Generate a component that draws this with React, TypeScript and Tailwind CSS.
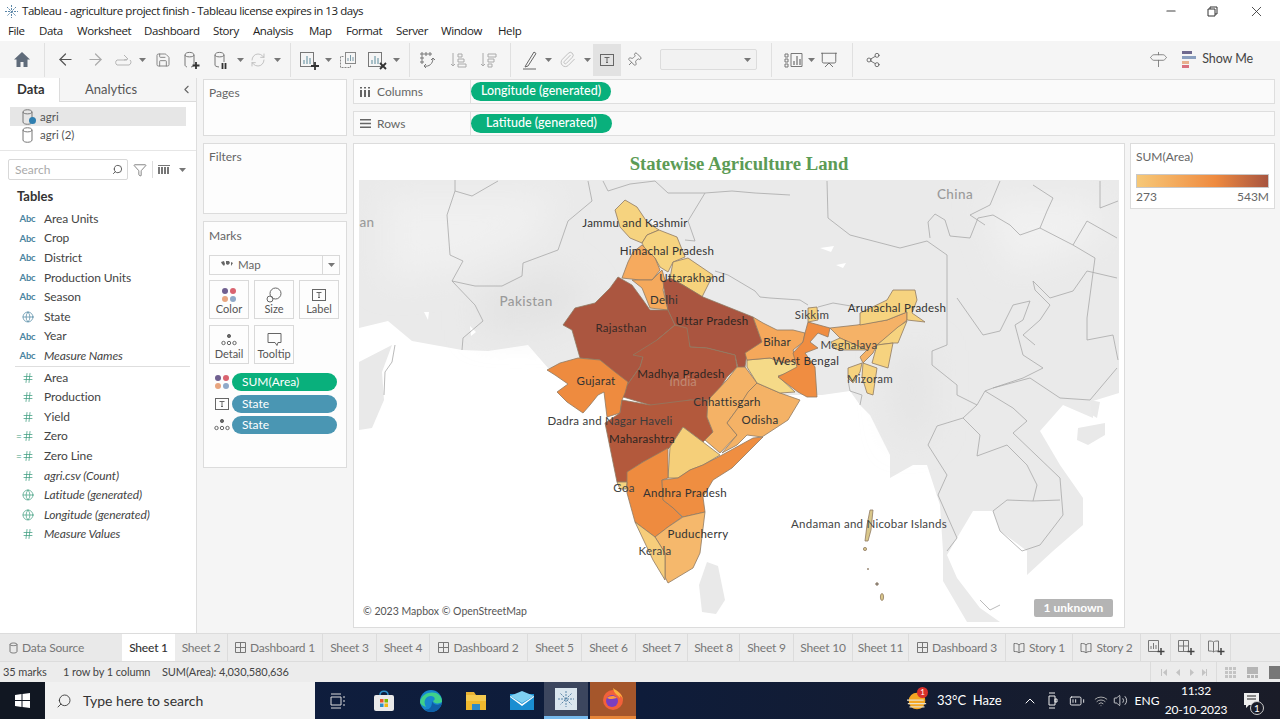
import React from 'react';
import {
  ArrowLeft, ArrowRight, ChevronLeft, ChevronUp, Globe, Hash, Search, Pin, Paperclip, Save, RefreshCw,
  Minus, X, Share2, Presentation, Signpost, Funnel, Wifi, Volume2, BatteryMedium,
} from 'lucide-react';

const Caret = () => (
  <svg width="7" height="4" viewBox="0 0 7 4"><path d="M0 0h7L3.5 4z" fill="#777" /></svg>
);

const Sep = () => <div className="w-px h-[34px] bg-[#e0e0e0]" />;

const Slot: React.FC<{ w: string; children?: React.ReactNode }> = ({ w, children }) => (
  <div className={`${w} h-full flex items-center justify-center shrink-0`}>{children}</div>
);

const Db = ({ c = '#777' }: { c?: string }) => (
  <svg width="14" height="18" viewBox="0 0 14 18" fill="none" stroke={c} strokeWidth="1">
    <path d="M2 4c0-3 9-3 9 0v10c0 3-9 3-9 0zM2 4c0 2.5 9 2.5 9 0" />
  </svg>
);

const BarDoc = ({ badge }: { badge?: React.ReactNode }) => (
  <svg width="22" height="22" viewBox="0 0 22 22" fill="none" stroke="#777">
    <rect x="2.5" y="3.5" width="13" height="14" />
    <path d="M6 15V11M9 15V7M12 15V9" stroke="#5a8a9a" />
    {badge}
  </svg>
);

const ColorDots = () => (
  <svg width="16" height="16" viewBox="0 0 16 16">
    <circle cx="4" cy="4" r="3" fill="#6f5f8f" />
    <circle cx="12" cy="4" r="3" fill="#d9636f" />
    <circle cx="4" cy="12" r="3" fill="#e8a57f" />
    <circle cx="12" cy="12" r="3" fill="#8fa9c9" />
  </svg>
);

const DetailDots = () => (
  <svg width="16" height="14" viewBox="0 0 16 14" fill="none" stroke="#666">
    <circle cx="8" cy="3" r="1.6" fill="#666" />
    <circle cx="2.5" cy="10" r="1.7" />
    <circle cx="8" cy="10" r="1.7" />
    <circle cx="13.5" cy="10" r="1.7" />
  </svg>
);

const TBox = () => (
  <svg width="14" height="12" viewBox="0 0 14 12" fill="none" stroke="#666">
    <rect x="0.5" y="0.5" width="13" height="11" />
    <path d="M4.5 3.5h5M7 3.5v5M6 8.5h2" />
  </svg>
);

const TopBar = () => (
  <div className="h-[22px] flex items-center shrink-0 bg-white">
    <svg className="ml-[4px]" width="15" height="15" viewBox="0 0 15 15" stroke="#5b86a8" fill="none">
      <path d="M7.5 1v13M1 7.5h13M3 3l9 9M12 3l-9 9" strokeDasharray="2 1" />
    </svg>
    <span className="ml-[3px] text-[11.5px] text-[#222] font-['Open_Sans',sans-serif] tracking-[-0.45px]">
      Tableau - agriculture project finish - Tableau license expires in 13 days
    </span>
    <div className="flex-1" />
    <Minus size={14} color="#444" className="mr-[29px]" />
    <svg className="mr-[30px]" width="11" height="11" viewBox="0 0 11 11" fill="none" stroke="#333">
      <path d="M1 3h7v7H1zM3 3V1h7v7H8" />
    </svg>
    <X size={17} color="#333" strokeWidth={1.2} className="mr-[15px]" />
  </div>
);

const menus: [string, string][] = [
  ['File', 'w-[31px]'], ['Data', 'w-[38px]'], ['Worksheet', 'w-[67px]'], ['Dashboard', 'w-[69px]'],
  ['Story', 'w-[40px]'], ['Analysis', 'w-[56px]'], ['Map', 'w-[37px]'], ['Format', 'w-[50px]'],
  ['Server', 'w-[45px]'], ['Window', 'w-[57px]'], ['Help', 'w-[40px]'],
];

const MenuBar = () => (
  <div className="h-[19px] flex items-center pl-[8px] pb-[2px] shrink-0 bg-white text-[11.5px] text-[#222] font-['Open_Sans',sans-serif] tracking-[-0.4px]">
    {menus.map(([m, w]) => (
      <span key={m} className={w}>{m}</span>
    ))}
  </div>
);

const Toolbar = () => (
  <div className="h-[37px] flex items-center pl-[7px] pr-[27px] bg-[#f5f5f5] shrink-0">
    <Slot w="w-[30px]">
      <svg width="16" height="15" viewBox="0 0 16 15"><path d="M8 0L0 7.5h2.5V15h4v-5h3v5h4V7.5H16z" fill="#5f6b7a" /></svg>
    </Slot>
    <div className="w-[7px]" /><Sep /><div className="w-[5px]" />
    <Slot w="w-[30px]"><ArrowLeft size={19} color="#555" strokeWidth={1.5} /></Slot>
    <Slot w="w-[30px]"><ArrowRight size={19} color="#aaa" strokeWidth={1.5} /></Slot>
    <Slot w="w-[26px]">
      <svg width="20" height="12" viewBox="0 0 20 12" fill="none" stroke="#b5b5b5">
        <path d="M14 6H4a3 3 0 000 5h12a3 3 0 001-5M11 1l4 4-4 1" />
      </svg>
    </Slot>
    <Slot w="w-[12px]"><Caret /></Slot>
    <Slot w="w-[29px]"><Save size={16} color="#777" strokeWidth={1.3} /></Slot>
    <Slot w="w-[30px]">
      <svg width="20" height="20" viewBox="0 0 20 20" fill="none" stroke="#777">
        <path d="M3 5c0-3.5 9-3.5 9 0v10c0 1-1 1.500-3 2M3 5c0 2.500 9 2.500 9 0M3 5v10c0 1 1 1.500 2 2" />
        <path d="M14 12v7M10.500 15.500h7" stroke="#333" strokeWidth="1.800" />
      </svg>
    </Slot>
    <Slot w="w-[30px]">
      <svg width="20" height="20" viewBox="0 0 20 20" fill="none" stroke="#777">
        <path d="M3 5c0-3.500 9-3.500 9 0v7M3 5c0 2.500 9 2.500 9 0M3 5v10c0 1 1 1.500 4 2" />
        <path d="M10.500 13v6M13.500 13v6" stroke="#333" strokeWidth="1.800" />
      </svg>
    </Slot>
    <Slot w="w-[7px]"><Caret /></Slot>
    <Slot w="w-[28px]"><RefreshCw size={16} color="#bbb" strokeWidth={1.3} /></Slot>
    <Slot w="w-[11px]"><Caret /></Slot>
    <div className="w-[7px]" /><Sep /><div className="w-[3px]" />
    <Slot w="w-[30px]"><BarDoc badge={<path d="M17 13v8M13 17h8" stroke="#333" strokeWidth="1.800" />} /></Slot>
    <Slot w="w-[9px]"><Caret /></Slot>
    <Slot w="w-[30px]">
      <svg width="18" height="18" viewBox="0 0 18 18" fill="none" stroke="#888">
        <rect x="6.500" y="1.500" width="10" height="11" fill="#f5f5f5" />
        <path d="M9 10V7M11.500 10V4M14 10V6" stroke="#7a9aa8" />
        <path d="M4.500 5.500h-3v11h10v-2" strokeDasharray="2 1" />
      </svg>
    </Slot>
    <Slot w="w-[28px]"><BarDoc badge={<path d="M14 14l6 6M20 14l-6 6" stroke="#333" strokeWidth="1.800" />} /></Slot>
    <Slot w="w-[10px]"><Caret /></Slot>
    <div className="w-[8px]" /><Sep /><div className="w-[3px]" />
    <Slot w="w-[30px]">
      <svg width="18" height="18" viewBox="0 0 18 18" fill="none" stroke="#777">
        <path d="M2 2h2v2H2zM6 2h2v2H6zM10 2h2v2h-2zM2 6h2v2H2zM2 10h2v2H2zM5 15c5 1 9-2 9-8M12 9l2-2 2 2M7 13l-2 2 2 2" />
      </svg>
    </Slot>
    <Slot w="w-[30px]">
      <svg width="18" height="18" viewBox="0 0 18 18" fill="none" stroke="#aaa">
        <path d="M4 2v13M2 13l2 2 2-2M9 3h4v3H9zM9 8h6v3H9zM9 13h8v3H9z" />
      </svg>
    </Slot>
    <Slot w="w-[30px]">
      <svg width="18" height="18" viewBox="0 0 18 18" fill="none" stroke="#aaa">
        <path d="M4 2v13M2 13l2 2 2-2M9 3h8v3H9zM9 8h6v3H9zM9 13h4v3H9z" />
      </svg>
    </Slot>
    <div className="w-[7px]" /><Sep /><div className="w-[6px]" />
    <Slot w="w-[26px]">
      <svg width="18" height="20" viewBox="0 0 18 20" fill="none" stroke="#666">
        <path d="M5 15L13 2l2 1.500L7 16l-3 1zM2 19h13" />
      </svg>
    </Slot>
    <Slot w="w-[10px]"><Caret /></Slot>
    <Slot w="w-[28px]"><Paperclip size={17} color="#bbb" strokeWidth={1.3} /></Slot>
    <Slot w="w-[12px]"><Caret /></Slot>
    <div className="w-[28px] h-[32px] flex items-center justify-center bg-[#e2e2e2] shrink-0"><TBox /></div>
    <Slot w="w-[26px]"><Pin size={16} color="#777" strokeWidth={1.3} className="rotate-45" /></Slot>
    <div className="w-[13px]" />
    <div className="w-[97px] h-[21px] border border-[#dcdcdc] rounded-[2px] bg-[#f2f2f2] flex items-center justify-end pr-[5px] shrink-0"><Caret /></div>
    <div className="w-[14px]" /><Sep /><div className="w-[8px]" />
    <Slot w="w-[28px]">
      <svg width="20" height="16" viewBox="0 0 20 16" fill="none" stroke="#777">
        <path d="M1 2h3v3H1zM1 7h3v3H1zM1 12h3v3H1zM7 1.500h11v13H7z" />
        <path d="M10 13V9M13 13V4M16 13V7" stroke="#555" />
      </svg>
    </Slot>
    <Slot w="w-[7px]"><Caret /></Slot>
    <Slot w="w-[28px]"><Presentation size={18} color="#666" strokeWidth={1.2} /></Slot>
    <div className="w-[9px]" /><Sep /><div className="w-[5px]" />
    <Slot w="w-[30px]"><Share2 size={16} color="#555" strokeWidth={1.2} /></Slot>
    <div className="flex-1" />
    <Signpost size={19} color="#777" strokeWidth={1.1} className="mr-[14px]" />
    <svg className="mr-[5px]" width="15" height="19" viewBox="0 0 15 19">
      <rect y="1" width="10" height="3" fill="#6f6a8f" />
      <rect y="6" width="14" height="3" fill="#8a9fbf" />
      <rect y="11" width="7" height="3" fill="#e8b18f" />
      <rect y="15" width="7" height="3" fill="#d9717f" />
    </svg>
    <span className="text-[12.5px] text-[#444] tracking-[-0.1px]">Show Me</span>
  </div>
);

const AbcIcon = () => <span className="text-[9.5px] font-bold text-[#4a84a0] leading-none tracking-[-0.2px]">Abc</span>;
const HashIcon = () => <Hash size={12} color="#3f9e80" strokeWidth={1.5} />;
const GlobeIcon = ({ c }: { c: string }) => <Globe size={12} color={c} strokeWidth={1.4} />;

const dims: [React.ReactNode, string, boolean][] = [
  [<AbcIcon />, 'Area Units', false],
  [<AbcIcon />, 'Crop', false],
  [<AbcIcon />, 'District', false],
  [<AbcIcon />, 'Production Units', false],
  [<AbcIcon />, 'Season', false],
  [<GlobeIcon c="#4a84a0" />, 'State', false],
  [<AbcIcon />, 'Year', false],
  [<AbcIcon />, 'Measure Names', true],
];

const ZeroIcon = () => (
  <span className="flex items-center text-[#3f9e80] text-[10px] leading-none -ml-[5px]">=<HashIcon /></span>
);

const measures: [React.ReactNode, string, boolean][] = [
  [<HashIcon />, 'Area', false],
  [<HashIcon />, 'Production', false],
  [<HashIcon />, 'Yield', false],
  [<ZeroIcon />, 'Zero', false],
  [<ZeroIcon />, 'Zero Line', false],
  [<HashIcon />, 'agri.csv (Count)', true],
  [<GlobeIcon c="#3f9e80" />, 'Latitude (generated)', true],
  [<GlobeIcon c="#3f9e80" />, 'Longitude (generated)', true],
  [<HashIcon />, 'Measure Values', true],
];

const FieldRow: React.FC<{ icon: React.ReactNode; label: string; italic: boolean }> = ({ icon, label, italic }) => (
  <div className="h-[19.6px] flex items-center">
    <div className="w-[44px] pl-[19px] pr-[8px] flex justify-center shrink-0">{icon}</div>
    <span className={`text-[12px] text-[#444] tracking-[-0.1px] ${italic ? 'italic' : ''}`}>{label}</span>
  </div>
);

const DataPane = () => (
  <div className="w-[197px] shrink-0 bg-white border-r border-[#dedede] flex flex-col">
    <div className="h-[24px] flex">
      <div className="w-[59px] pl-[17px] flex items-center text-[13px] font-bold text-[#333]">Data</div>
      <div className="flex-1 bg-[#f5f5f5] border-l border-b border-[#dcdcdc] flex items-center pl-[25px] text-[13px] text-[#555]">
        Analytics
        <ChevronLeft size={13} color="#666" className="ml-auto mr-[3px]" />
      </div>
    </div>
    <div className="mt-[5px] mx-[10px] w-[176px] h-[19px] bg-[#e6e6e6] flex items-center pl-[11px]">
      <div className="relative h-[18px] w-[19px]">
        <Db />
        <span className="absolute left-[8px] top-[9px] w-[7px] h-[7px] rounded-full bg-[#2f7fb0]" />
      </div>
      <span className="text-[11.5px] text-[#555]">agri</span>
    </div>
    <div className="mx-[10px] h-[18px] flex items-center pl-[11px]">
      <div className="w-[19px] h-[18px]"><Db /></div>
      <span className="text-[11.5px] text-[#555]">agri (2)</span>
    </div>
    <div className="mt-[6px] h-px bg-[#e6e6e6]" />
    <div className="mt-[8px] h-[21px] flex items-center pl-[8px]">
      <div className="w-[120px] h-[21px] border border-[#d8d8d8] rounded-[2px] flex items-center pl-[6px] pr-[4px] text-[12px] text-[#aaa]">
        Search
        <Search size={11} color="#555" className="ml-auto -scale-x-100" />
      </div>
      <Funnel size={14} color="#555" strokeWidth={1.2} className="ml-[5px]" />
      <div className="w-px h-[17px] bg-[#ddd] ml-[5px]" />
      <svg className="ml-[5px]" width="12" height="9" viewBox="0 0 12 9" fill="#777">
        <path d="M0 0h12v1H0zM0 2h2v7H0zM3 2h2v7H3zM6 2h2v7H6zM9 2h2v7H9z" />
      </svg>
      <div className="ml-[9px] flex"><Caret /></div>
    </div>
    <div className="mt-[7px] h-[20px] pl-[17px] flex items-center text-[13px] font-bold text-[#333]">Tables</div>
    <div className="mt-[2px]">
      {dims.map(([icon, label, italic]) => (
        <FieldRow key={label} icon={icon} label={label} italic={italic} />
      ))}
    </div>
    <div className="ml-[15px] mr-[6px] mb-[1px] h-px bg-[#dedede]" />
    {measures.map(([icon, label, italic]) => (
      <FieldRow key={label} icon={icon} label={label} italic={italic} />
    ))}
  </div>
);

const MarkBtn: React.FC<{ icon: React.ReactNode; label: string }> = ({ icon, label }) => (
  <div className="w-[40px] h-[39px] border border-[#d9d9d9] flex flex-col items-center justify-between pt-[6px] pb-[2px] text-[11px] text-[#555] leading-none">
    <div className="h-[16px] flex items-center">{icon}</div>
    <span className="mb-[2px]">{label}</span>
  </div>
);

const MarkPill: React.FC<{ icon: React.ReactNode; label: string; color: string }> = ({ icon, label, color }) => (
  <div className="flex items-center h-[18px] pl-[6px]">
    <div className="w-[16px] flex justify-center">{icon}</div>
    <div className={`ml-[2px] w-[105px] h-[18px] rounded-full ${color} text-white text-[12px] flex items-center pl-[10px]`}>{label}</div>
  </div>
);

const CardsColumn = () => (
  <div className="w-[144px] shrink-0 ml-[6px] mt-[1px] flex flex-col">
    <div className="h-[57px] bg-[#fdfdfd] border border-[#dcdcdc] px-[5px] pt-[4px] text-[12px] text-[#666]">Pages</div>
    <div className="mt-[7px] h-[71px] bg-[#fdfdfd] border border-[#dcdcdc] px-[5px] pt-[4px] text-[12px] text-[#666]">Filters</div>
    <div className="mt-[7px] h-[247px] bg-[#fdfdfd] border border-[#dcdcdc] px-[5px] pt-[6px] text-[#666]">
      <div className="text-[12px] leading-[16px]">Marks</div>
      <div className="mt-[11px] w-[131px] h-[20px] border border-[#d9d9d9] flex items-center text-[11.5px]">
        <svg className="ml-[11px] mr-[5px]" width="12" height="9" viewBox="0 0 12 9" fill="#666">
          <path d="M0 1l3-1 1 3-1 2-2-2zM5 0l3 0 1 2-2 2-2-1zM10 1l2 1-2 3z" />
        </svg>
        Map
        <div className="ml-auto w-[17px] h-full border-l border-[#d9d9d9] flex items-center justify-center"><Caret /></div>
      </div>
      <div className="mt-[5px] flex gap-[5px] w-[131px]">
        <MarkBtn icon={<ColorDots />} label="Color" />
        <MarkBtn icon={<svg width="16" height="16" viewBox="0 0 16 16" fill="none" stroke="#666"><circle cx="9.500" cy="6.500" r="5.500" /><circle cx="4" cy="12" r="3" /></svg>} label="Size" />
        <MarkBtn icon={<TBox />} label="Label" />
      </div>
      <div className="mt-[6px] flex gap-[5px]">
        <MarkBtn icon={<DetailDots />} label="Detail" />
        <MarkBtn icon={<svg width="15" height="14" viewBox="0 0 15 14" fill="none" stroke="#666"><path d="M1 .500h13v9h-3l-1 3-2-3H1z" /></svg>} label="Tooltip" />
      </div>
      <div className="mt-[9px] -ml-[1px] flex flex-col gap-[3.500px]">
        <MarkPill icon={<ColorDots />} label="SUM(Area)" color="bg-[#09b07c]" />
        <MarkPill icon={<TBox />} label="State" color="bg-[#4a96b3]" />
        <MarkPill icon={<DetailDots />} label="State" color="bg-[#4a96b3]" />
      </div>
    </div>
  </div>
);

const Shelf: React.FC<{ icon: React.ReactNode; label: string; pill: string; pillW: string }> = ({ icon, label, pill, pillW }) => (
  <div className="h-[25px] border border-[#dedede] bg-[#fafafa] flex items-center">
    <div className="w-[117px] h-full border-r border-[#dedede] flex items-center pl-[6px] text-[12px] text-[#666] shrink-0">
      <div className="w-[17px] flex">{icon}</div>
      {label}
    </div>
    <div className={`${pillW} h-[19px] rounded-full bg-[#09b07c] text-white text-[12.5px] font-medium flex items-center justify-center shrink-0`}>{pill}</div>
  </div>
);

const states: [string, string][] = [
  ['615,210 625,200 637,207 647,222 659,230 647,235 642,243 630,238 620,227', '#f6d37f'],
  ['659,230 677,237 685,257 673,262 668,272 660,267 655,258 647,253 642,243 647,235', '#f6d37f'],
  ['673,262 688,258 713,275 702,297 683,285 670,278', '#f6d27c'],
  ['642,245 655,258 660,270 652,280 640,280 622,278 628,262 633,252', '#f6aa5e'],
  ['632,280 652,280 662,270 665,280 663,290 668,310 650,308 642,288', '#f5a95c'],
  ['618,277 632,285 643,300 650,310 668,310 675,325 657,340 663,350 643,357 640,367 625,388 613,372 600,360 580,358 572,330 563,325 575,308 595,303 610,288', '#ab5640'],
  ['663,282 670,278 683,285 703,297 723,305 753,317 762,342 747,353 745,367 738,368 735,355 707,348 690,347 685,328 675,325 668,310 665,295', '#aa5540'],
  ['633,355 657,340 675,325 687,328 690,347 707,348 735,355 737,367 727,377 717,393 707,403 690,400 660,408 623,397 625,388 640,367 643,357', '#b0583f'],
  ['547,370 560,363 578,358 600,360 615,372 628,382 625,393 622,400 620,413 607,417 604,392 598,395 590,405 583,413 567,402 557,392 568,384 555,375', '#ee8b3f'],
  ['622,400 650,405 690,400 708,400 707,417 713,432 703,442 683,427 670,447 667,450 643,462 628,472 627,482 617,482 605,423 620,413', '#b3593c'],
  ['708,400 727,380 737,367 745,367 757,383 750,390 738,408 727,423 737,435 720,453 705,440 713,432 707,417', '#f4b266'],
  ['748,392 757,383 780,393 800,400 788,420 762,437 747,435 737,445 722,453 737,435 727,423 738,408', '#f4b266'],
  ['747,360 770,358 785,363 797,360 805,368 778,376 795,392 780,393 757,383 747,367', '#f5da88'],
  ['753,317 763,323 777,330 793,330 805,333 803,342 793,350 797,360 785,363 770,358 747,360 745,353 762,342', '#f5a85b'],
  ['808,322 830,328 828,337 818,333 810,342 818,348 805,353 815,367 817,397 807,397 798,392 778,377 797,367 793,353 803,342 805,333', '#f08d41'],
  ['808,308 817,307 818,320 808,322', '#f6d27c'],
  ['830,328 857,325 887,320 907,312 907,320 898,328 877,345 873,353 863,363 860,357 867,350 840,338', '#f5b267'],
  ['860,313 887,300 893,290 915,290 917,300 912,313 925,322 907,320 907,312 887,320 860,325', '#f6d37f'],
  ['898,327 907,321 898,343 893,343 877,345', '#f6d37f'],
  ['877,345 893,343 888,368 872,363', '#f6d37f'],
  ['863,363 877,368 873,395 867,393 862,377', '#f6d37f'],
  ['848,368 862,363 860,372 853,383 848,378', '#f6d37f'],
  ['831,342 840,338 867,350 860,350 840,350 835,349', '#f5cf79'],
  ['683,427 703,442 720,455 703,465 690,470 678,478 668,478 670,447', '#f5cf79'],
  ['668,448 668,478 662,480 663,500 672,507 682,517 668,527 655,537 635,522 627,493 627,472 643,462', '#ee8b3f'],
  ['763,437 753,438 722,455 703,465 690,470 678,478 662,480 663,500 672,507 683,517 705,512 703,497 713,480 732,468 747,453', '#ef8e41'],
  ['683,517 705,512 700,553 693,568 668,583 665,577 665,553 655,537 668,527', '#f5b86c'],
  ['635,522 655,537 665,553 665,580 653,560', '#f6cd7b'],
  ['617,482 627,482 626,489 620,489', '#f6d37f'],
];

const borders = [
  '455,180 455,191 472,196 498,181',
  '455,191 447,215 450,255 463,261 452,281 475,305 483,321 463,338 462,350',
  '452,281 475,286 502,286 522,276 523,263 558,250 568,221 592,201 588,181',
  '603,181 608,191 630,184 655,181 668,193 705,193 688,221 695,241 685,240',
  '705,193 732,191 755,193 790,195',
  '715,271 728,275 755,291 760,297 770,298 800,300 808,305',
  '818,307 833,303 857,307',
  '827,181 828,218 850,235 900,248 927,241 947,255 947,295 947,345 932,351 932,365 957,385 957,395 977,405 963,418 937,426 928,445 947,475 938,495 957,538 947,551',
  '957,298 983,335 1000,331 1013,305 1030,301 1023,320 1015,325 1023,355 1043,368 1023,378 993,388 985,391 977,405',
  '985,391 1013,408 1027,421 1013,433 1060,478 1063,515 1040,545 1022,551 1000,531 993,511 1007,500 1033,501 1060,500',
  '963,418 980,435 977,456 1007,445 1027,465 1037,485 1033,501',
  '993,388 1030,378 1060,398 1090,400 1117,368',
  '930,238 928,222 935,214 945,220 950,236 970,238 978,218 993,215 1010,225 1020,235 1040,228 1073,245 1095,258 1087,318 1087,340 1113,335 1118,360',
  '1033,281 1050,298 1073,291 1087,271 1117,278',
  '1000,181 990,205 970,215 985,225',
  '1033,185 1053,198 1047,211 1040,228',
  '1100,181 1100,208 1118,201',
  '1073,245 1087,221 1117,238',
  '1033,281 1035,290 1050,305 1040,320 1023,335 1035,345',
  '860,405 862,395 850,391 848,380',
  '395,345 392,362 385,372 384,395',
  '980,600 990,610 1000,605',
];

const labels: [string, number, number, string][] = [
  ['Jammu and Kashmir', 635, 227, '#333'],
  ['Himachal Pradesh', 667, 255, '#333'],
  ['Uttarakhand', 692, 282, '#333'],
  ['Delhi', 664, 304, '#333'],
  ['Rajasthan', 621, 332, '#3a2a26'],
  ['Uttar Pradesh', 712, 325, '#2e2622'],
  ['Bihar', 777, 346, '#333'],
  ['West Bengal', 806, 365, '#333'],
  ['Sikkim', 812, 319, '#444'],
  ['Arunachal Pradesh', 897, 312, '#333'],
  ['Meghalaya', 849, 349, '#444'],
  ['Mizoram', 870, 383, '#444'],
  ['Gujarat', 596, 385, '#333'],
  ['Madhya Pradesh', 681, 378, '#2e2622'],
  ['Chhattisgarh', 727, 406, '#333'],
  ['Odisha', 760, 424, '#333'],
  ['Dadra and Nagar Haveli', 610, 425, '#3c3c3c'],
  ['Maharashtra', 642, 443, '#2e2622'],
  ['Goa', 624, 492, '#444'],
  ['Andhra Pradesh', 685, 497, '#333'],
  ['Puducherry', 698, 538, '#333'],
  ['Kerala', 655, 555, '#444'],
  ['Andaman and Nicobar Islands', 869, 528, '#444'],
];

const MapView = () => (
  <div className="relative mx-[5px] w-[760px] h-[442px] overflow-hidden bg-white">
    <svg width="760" height="442" viewBox="359 180 760 442">
      <defs>
        <filter id="terrain" x="-30%" y="-30%" width="160%" height="160%">
          <feGaussianBlur stdDeviation="16" />
        </filter>
      </defs>
      <polygon
        fill="#eaeaea"
        points="359,180 1119,180 1119,393 1093,401 1093,418 1063,405 1040,431 1060,465 1083,498 1083,525 1053,551 1027,575 1027,551 1000,531 993,511 973,511 957,538 947,555 957,578 980,608 1000,622 967,622 943,581 943,551 940,505 927,465 913,465 890,478 890,455 870,415 860,405 850,391 822,395 790,395 740,400 650,400 600,380 560,370 548,368 528,345 488,351 462,350 412,341 388,321 359,328"
      />
      <g filter="url(#terrain)">
        <polygon fill="#f0f0f0" points="385,195 560,195 530,240 460,270 385,280" />
        <polygon fill="#f1f1f1" points="985,200 1100,200 1100,240 1010,270" />
        <polygon fill="#e3e3e3" points="480,295 560,270 590,300 550,330 480,330" />
        <polygon fill="#e4e4e4" points="890,360 930,350 930,430 900,440" />
      </g>
      <polygon fill="#e9e9e9" points="359,362 392,345 382,372 384,400 372,428 359,430" />
      <polygon fill="#e9e9e9" points="707,562 718,566 725,600 716,614 702,612 699,585" />
      <polygon fill="#e9e9e9" points="1078,428 1105,423 1105,435 1088,445 1077,440" />
      <polygon fill="#e9e9e9" points="1090,400 1100,402 1097,418 1092,415" />
      <path d="M650 220l8 2-4 3zM820 248l14-2-3 6zM836 265l10-2-3 5zM470 326l6 6-5 4zM424 312l5 0-1 8z" fill="#fff" />
      <g fill="none" stroke="#a8a8a8" strokeWidth="0.8" strokeLinejoin="round">
        {borders.map((b) => (
          <polyline key={b} points={b} />
        ))}
      </g>
      <g stroke="#8f7a62" strokeWidth="0.8" strokeLinejoin="round">
        {states.map(([p, c]) => (
          <polygon key={p} points={p} fill={c} />
        ))}
        <polygon points="870,510 873,510 871,530 868,541 865,541 867,525" fill="#d9c78a" />
        <circle cx="865" cy="549" r="1.600" fill="#d9c78a" />
        <circle cx="868" cy="569" r="0.600" fill="#888" />
        <circle cx="877" cy="584" r="1.300" fill="#888" />
        <ellipse cx="882" cy="597" rx="1.600" ry="3.500" fill="#d9c78a" />
      </g>
      <g fontFamily="Lato, sans-serif" textAnchor="middle">
        <text x="683" y="386" fontSize="13" fill="#c08872">India</text>
        <text x="526" y="306" fontSize="13.500" fontWeight="500" fill="#9a9a9a" letterSpacing="0.4">Pakistan</text>
        <text x="955" y="199" fontSize="13.500" fontWeight="500" fill="#9a9a9a" letterSpacing="0.4">China</text>
        <text x="367" y="227" fontSize="13.500" fontWeight="500" fill="#9a9a9a" letterSpacing="0.4">an</text>
        {labels.map(([t, x, y, c]) => (
          <text key={t} x={x} y={y} fontSize="11.500" fill={c} letterSpacing="0.25">{t}</text>
        ))}
      </g>
    </svg>
    <span className="absolute left-[4px] bottom-[2px] text-[10.500px] text-[#555]">© 2023 Mapbox © OpenStreetMap</span>
    <span className="absolute right-[6px] bottom-[5px] w-[79px] h-[18px] rounded-[2px] bg-[#b4b4b4] text-white text-[12px] font-bold flex items-center justify-center">1 unknown</span>
  </div>
);

const ViewColumn = () => (
  <div className="flex-1 ml-[6px] mr-[5px] mt-[1px] flex flex-col">
    <Shelf
      icon={<svg width="10" height="10" viewBox="0 0 10 10" fill="#666"><path d="M0 3h2v7H0zM4 3h2v7H4zM8 3h2v7H8zM0 0h2v1.500H0zM4 0h2v1.500H4zM8 0h2v1.500H8z" /></svg>}
      label="Columns"
      pill="Longitude (generated)"
      pillW="w-[140px]"
    />
    <div className="mt-[7px]">
      <Shelf
        icon={<svg width="11" height="9" viewBox="0 0 11 9" fill="#666"><path d="M0 0h11v1.500H0zM0 3.700h11v1.500H0zM0 7.500h11V9H0z" /></svg>}
        label="Rows"
        pill="Latitude (generated)"
        pillW="w-[141px]"
      />
    </div>
    <div className="mt-[7px] flex items-start gap-[5px]">
      <div className="w-[772px] h-[485px] bg-white border border-[#dcdcdc] flex flex-col">
        <div className="h-[36px] pt-[4px] flex items-center justify-center text-[18.7px] font-bold text-[#5c9b55] font-['Liberation_Serif',serif]">
          Statewise Agriculture Land
        </div>
        <MapView />
      </div>
      <div className="flex-1 h-[66px] bg-white border border-[#dcdcdc] px-[5px] pt-[5px] text-[#666] text-[12px]">
        <div className="leading-[16px]">SUM(Area)</div>
        <div className="mt-[9px] h-[14px] border border-[#c9c9c9] bg-linear-to-r from-[#f6c877] via-[#ee8a3f] via-60% to-[#a8553f]" />
        <div className="flex justify-between leading-[16px] mt-[1px]"><span>273</span><span>543M</span></div>
      </div>
    </div>
  </div>
);

const tabs: [string, string, 'none' | 'dash' | 'story' | 'active'][] = [
  ['Sheet 1', 'w-[53px]', 'active'],
  ['Sheet 2', 'w-[53px]', 'none'],
  ['Dashboard 1', 'w-[95px]', 'dash'],
  ['Sheet 3', 'w-[54px]', 'none'],
  ['Sheet 4', 'w-[53px]', 'none'],
  ['Dashboard 2', 'w-[98px]', 'dash'],
  ['Sheet 5', 'w-[54px]', 'none'],
  ['Sheet 6', 'w-[54px]', 'none'],
  ['Sheet 7', 'w-[52px]', 'none'],
  ['Sheet 8', 'w-[52px]', 'none'],
  ['Sheet 9', 'w-[54px]', 'none'],
  ['Sheet 10', 'w-[59px]', 'none'],
  ['Sheet 11', 'w-[56px]', 'none'],
  ['Dashboard 3', 'w-[97px]', 'dash'],
  ['Story 1', 'w-[67px]', 'story'],
  ['Story 2', 'w-[68px]', 'story'],
];

const DashGlyph = () => (
  <svg className="mr-[4px]" width="11" height="11" viewBox="0 0 11 11" fill="none" stroke="#777">
    <path d="M.5.500h10v10H.5zM5.500.500v10M.5 5.500h10" />
  </svg>
);

const StoryGlyph = () => (
  <svg className="mr-[4px]" width="12" height="12" viewBox="0 0 12 12" fill="none" stroke="#777">
    <path d="M1 1.500c2 0 4 0 5 1.500 1-1.500 3-1.500 5-1.500v8c-2 0-4 0-5 1.500-1-1.500-3-1.500-5-1.500zM6 3v8" />
  </svg>
);

const Plus = () => <path d="M14 9v7M10.500 12.500h7" stroke="#444" strokeWidth="1.500" />;

const TabBar = () => (
  <div className="h-[29px] shrink-0 flex items-stretch bg-[#ececec] border-t border-[#dcdcdc] border-b text-[12px] text-[#777] tracking-[-0.2px]">
    <div className="w-[122px] flex items-center pl-[9px] bg-[#e9e9e9]">
      <svg className="mr-[4px]" width="9" height="12" viewBox="0 0 9 12" fill="none" stroke="#777"><path d="M1 2.500c0-2 7-2 7 0v7c0 2-7 2-7 0zM1 2.500c0 1.500 7 1.500 7 0" /></svg>
      Data Source
    </div>
    {tabs.map(([t, w, k]) => (
      <div
        key={t}
        className={`${w} flex items-center justify-center ${k === 'active' ? 'bg-white text-[#333] font-medium' : 'border-r border-[#dcdcdc]'}`}
      >
        {k === 'dash' && <DashGlyph />}
        {k === 'story' && <StoryGlyph />}
        {t}
      </div>
    ))}
    {[0, 1, 2].map((i) => (
      <div key={i} className="w-[30px] flex items-center justify-center border-r border-[#dcdcdc]">
        <svg width="18" height="17" viewBox="0 0 18 17" fill="none" stroke="#777">
          {i === 0 && <path d="M1.500 1.500h10v11h-10zM4 10V7M6.500 10V4M9 10V6" />}
          {i === 1 && <path d="M1.500 1.500h10v11h-10zM6.500 1.500v11M1.500 7h10" />}
          {i === 2 && <path d="M1.500 2c2 0 4 0 5 1 1-1 3-1 5-1v10c-2 0-4 0-5 1-1-1-3-1-5-1zM6.500 3v10" />}
          <Plus />
        </svg>
      </div>
    ))}
  </div>
);

const StatusBar = () => (
  <div className="h-[20px] shrink-0 flex items-center bg-[#ececec] text-[11px] text-[#444] tracking-[-0.1px]">
    <span className="w-[63px] pl-[3px]">35 marks</span>
    <span className="w-[99px]">1 row by 1 column</span>
    <span>SUM(Area): 4,030,580,636</span>
    <div className="flex-1" />
    <div className="w-[66px] h-full border-l border-[#dcdcdc] flex items-center justify-evenly text-[#bbb]">
      <svg width="46" height="7" viewBox="0 0 46 7" fill="#c4c4c4">
        <path d="M0 0h1v7H0zM6 0v7L2 3.500zM19 0v7l-4-3.500zM29 0v7l4-3.500zM41 0v7l4-3.500zM45 0h1v7h-1z" />
      </svg>
    </div>
    <div className="w-[64px] h-full border-l border-[#dcdcdc] flex items-center gap-[11px] pl-[8px]">
      <svg width="11" height="11" viewBox="0 0 11 11" fill="#c4c4c4"><path d="M0 0h3v3H0zM4 0h3v3H4zM8 0h3v3H8zM0 4h3v3H0zM4 4h3v3H4zM8 4h3v3H8zM0 8h3v3H0zM4 8h3v3H4zM8 8h3v3H8z" /></svg>
      <svg width="11" height="11" viewBox="0 0 11 11" fill="#b5b5b5"><path d="M0 0h11v7H0zM0 8h3v3H0zM4 8h3v3H4zM8 8h3v3H8z" /></svg>
      <svg width="11" height="13" viewBox="0 0 11 13" fill="#777"><path d="M0 0h11v13H0z" /></svg>
    </div>
  </div>
);

const Taskbar = () => (
  <div className="h-[37px] shrink-0 flex items-stretch bg-linear-to-r from-[#0f1e3f] via-[#0e1c3a] to-[#1a1c28] text-white">
    <div className="w-[45px] bg-[#111722] flex items-center justify-center">
      <svg width="15" height="15" viewBox="0 0 15 15" fill="#fff"><path d="M0 2l6.500-1v6H0zM7.500 1L15 0v7H7.500zM0 8h6.500v6L0 13zM7.500 8H15v7l-7.500-1z" /></svg>
    </div>
    <div className="w-[270px] bg-[#f1f1f1] flex items-center pl-[11px] text-[#333] text-[14px]">
      <Search size={16} color="#333" strokeWidth={1.300} className="-scale-x-100 mr-[11px]" />
      Type here to search
    </div>
    <div className="w-[45px] flex items-center justify-center">
      <svg width="15" height="16" viewBox="0 0 15 16" fill="none" stroke="#ddd"><path d="M1 1h10M1 15h10M1 4h10v8H1zM14 3v2M14 7v2M14 11v2" /></svg>
    </div>
    <div className="w-[48px] flex items-center justify-center">
      <svg width="22" height="22" viewBox="0 0 22 22">
        <rect x="1" y="5" width="20" height="16" rx="2" fill="#e9e9e9" />
        <path d="M7 5c0-5 8-5 8 0" fill="none" stroke="#2d8fc9" strokeWidth="1.500" />
        <rect x="7" y="9" width="3.500" height="3.500" fill="#e8562a" />
        <rect x="11.500" y="9" width="3.500" height="3.500" fill="#7fba00" />
        <rect x="7" y="13.500" width="3.500" height="3.500" fill="#2d8fc9" />
        <rect x="11.500" y="13.500" width="3.500" height="3.500" fill="#f2b90f" />
      </svg>
    </div>
    <div className="w-[45px] flex items-center justify-center">
      <svg width="24" height="24" viewBox="0 0 24 24">
        <circle cx="12" cy="12" r="11" fill="#1787cf" />
        <path d="M1 13C2 5 11 2 17 4c4 1.500 6 5 6 9-3 2-8 2-9-1 3-1 2-5-2-5-6 0-8 6-5 11-3-1-6-3-6-5z" fill="#3fd08a" />
        <path d="M13 12c1 4 6 5 10 2-1 5-5 9-11 9-3 0-5-1-6-3 3 1 7 0 7-8z" fill="#0f5fa8" />
      </svg>
    </div>
    <div className="w-[46px] flex items-center justify-center">
      <svg width="22" height="20" viewBox="0 0 22 20">
        <path d="M1 1h8l2 3h-10z" fill="#e9b233" />
        <rect x="1" y="4" width="20" height="15" fill="#f4c94f" />
        <rect x="1" y="10" width="20" height="9" fill="#f0b92e" />
        <rect x="7" y="13" width="8" height="6" fill="#2e8bc9" />
      </svg>
    </div>
    <div className="w-[45px] flex items-center justify-center">
      <svg width="24" height="19" viewBox="0 0 24 19">
        <rect y="3" width="24" height="16" fill="#1a8ed1" />
        <path d="M0 5l12-5 12 5-12 7z" fill="#7fd0f2" />
        <path d="M0 5l12 8 12-8v1L12 15 0 6z" fill="#fff" />
      </svg>
    </div>
    <div className="w-[44px] bg-[#3c465e] border-b-[3px] border-[#76b9ed] flex items-center justify-center">
      <div className="w-[22px] h-[22px] bg-[#dbe6ee] flex items-center justify-center">
        <svg width="18" height="18" viewBox="0 0 18 18" stroke="#5b86a8" fill="none">
          <path d="M9 1v16M1 9h16M3.500 3.500l11 11M14.500 3.500l-11 11" strokeDasharray="2 1" />
        </svg>
      </div>
    </div>
    <div className="w-[46px] ml-[2px] bg-[#a5562b] border-b-[3px] border-[#e8873a] flex items-center justify-center">
      <svg width="24" height="24" viewBox="0 0 24 24">
        <circle cx="12" cy="13" r="10" fill="#f2613a" />
        <path d="M12 1c4 3 10 6 10 13 0-3-2-5-4-6 1 1 1 2 1 3-2-3-6-4-7-10z" fill="#fbb03b" />
        <circle cx="11" cy="14" r="6" fill="#7a3fc0" />
        <path d="M6 11c2-2 7-3 10 0-2 0-3 1-5 1s-3 0-5-1z" fill="#ff9a3c" />
      </svg>
    </div>
    <div className="flex-1" />
    <div className="w-[30px] pr-[10px] flex items-center justify-center relative">
      <svg width="24" height="24" viewBox="0 0 24 24">
        <circle cx="12" cy="12" r="10" fill="#f4a623" />
        <path d="M0 11h20M1 15h22M3 19h18" stroke="#e8e0c8" strokeWidth="1.500" />
      </svg>
      <span className="absolute right-[9px] top-[5px] w-[11px] h-[11px] rounded-full bg-[#d9302a] text-[8px] leading-[11px] text-center">1</span>
    </div>
    <div className="w-[82px] flex items-center text-[13px] whitespace-pre">33°C  Haze</div>
    <div className="w-[21px] flex items-center justify-center"><ChevronUp size={16} strokeWidth={1.500} /></div>
    <div className="w-[24px] flex items-center justify-center">
      <svg width="12" height="17" viewBox="0 0 12 17" fill="none" stroke="#eee"><path d="M3 1h6M3 16h6M3 4h6v9H3zM9 7h2v3H9z" /></svg>
    </div>
    <div className="w-[26px] flex items-center justify-center"><BatteryMedium size={16} strokeWidth={1.300} /></div>
    <div className="w-[21px] flex items-center justify-center"><Wifi size={14} color="#bbb" strokeWidth={1.500} /></div>
    <div className="w-[19px] flex items-center justify-center"><Volume2 size={15} strokeWidth={1.200} /></div>
    <div className="w-[34px] flex items-center justify-center text-[12px]">ENG</div>
    <div className="w-[64px] pb-[1px] flex flex-col items-center justify-center text-[12px] leading-[19px] tracking-[-0.2px]">
      <span>11:32</span>
      <span>20-10-2023</span>
    </div>
    <div className="w-[46px] flex items-center justify-center relative">
      <svg width="17" height="17" viewBox="0 0 17 17" fill="#eee"><path d="M1 1h15v12H6l-3 3v-3H1z" /><path d="M4 4h9M4 7h9" stroke="#222" /></svg>
      <span className="absolute right-[10px] bottom-[4px] w-[14px] h-[14px] rounded-full bg-[#1a1c28] border border-[#ccc] text-[10px] leading-[12px] text-center">1</span>
    </div>
    <div className="w-[6px]" />
  </div>
);

export default function App() {
  return (
    <div className="w-[1280px] h-[719px] flex flex-col overflow-hidden bg-[#f5f5f5] font-['Lato',sans-serif]">
      <TopBar />
      <MenuBar />
      <Toolbar />
      <div className="h-[555px] shrink-0 flex">
        <DataPane />
        <CardsColumn />
        <ViewColumn />
      </div>
      <TabBar />
      <StatusBar />
      <Taskbar />
    </div>
  );
}
